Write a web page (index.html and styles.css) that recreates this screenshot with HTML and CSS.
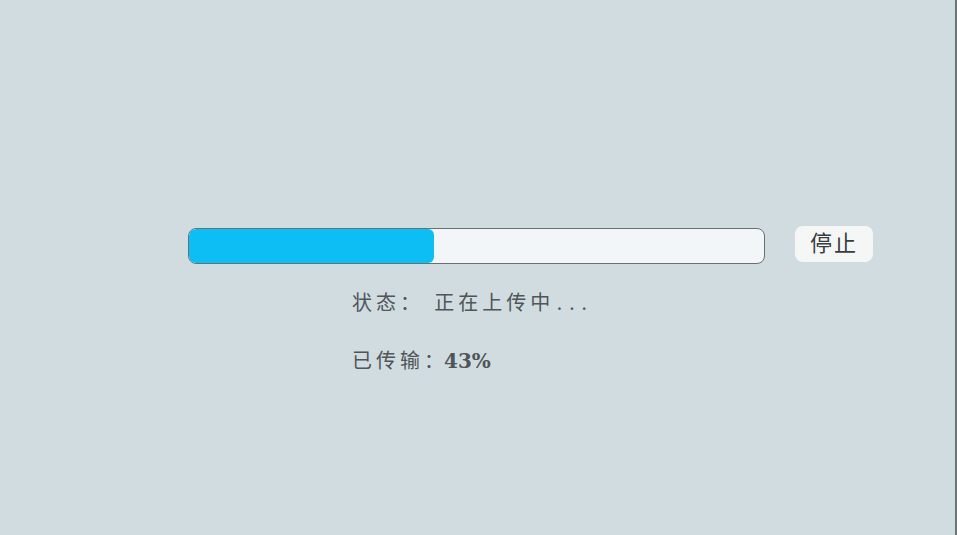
FILE: index.html
```html
<!DOCTYPE html>
<html lang="zh">
<head>
<meta charset="utf-8">
<link rel="stylesheet" href="styles.css">
</head>
<body>
<div class="screen">
  <div class="row">
    <div class="track"><div class="fill" style="width:245px"></div></div>
    <button class="stop">停止</button>
  </div>
  <div class="info">
    <div class="line">状态： 正在上传中<span class="dots">...</span></div>
    <div class="line second"><span class="label">已传输</span>：<b class="pct">43%</b></div>
  </div>
</div>
</body>
</html>
```
FILE: styles.css
```css
html, body {
  margin: 0;
  padding: 0;
}
body {
  width: 957px;
  height: 535px;
  overflow: hidden;
  background: #d1dce0;
}
.screen {
  box-sizing: border-box;
  width: 957px;
  height: 535px;
  border-right: 2px solid #6e7476;
  padding-top: 226px;
  padding-left: 188px;
  font-family: "DejaVu Serif", "Noto Sans CJK SC", serif;
  color: #4f5558;
}
.row {
  display: flex;
  align-items: flex-start;
  gap: 30px;
}
.track {
  box-sizing: border-box;
  width: 577px;
  height: 36px;
  margin-top: 2px;
  border: 1px solid #6a6f72;
  border-radius: 8px;
  background: #f2f6f8;
  overflow: hidden;
}
.fill {
  height: 100%;
  background: #0dbef5;
  border-radius: 6px;
}
.stop {
  width: 78px;
  height: 36px;
  border: none;
  border-radius: 8px;
  background: #f5f7f7;
  font-family: "Noto Sans CJK SC", sans-serif;
  font-size: 22px;
  color: #3a3d3f;
  padding: 0 0 5px 0;
  letter-spacing: 2px;
  line-height: 31px;
}
.info {
  padding-left: 164px;
  margin-top: 24px;
}
.line {
  font-size: 20px;
  line-height: 30px;
  letter-spacing: 4px;
}
.dots {
  margin-left: 2px;
  letter-spacing: 6px;
}
.second {
  margin-top: 28px;
  letter-spacing: 0;
}
.label {
  letter-spacing: 4px;
}
.pct {
  font-weight: bold;
  letter-spacing: 0;
}
```
